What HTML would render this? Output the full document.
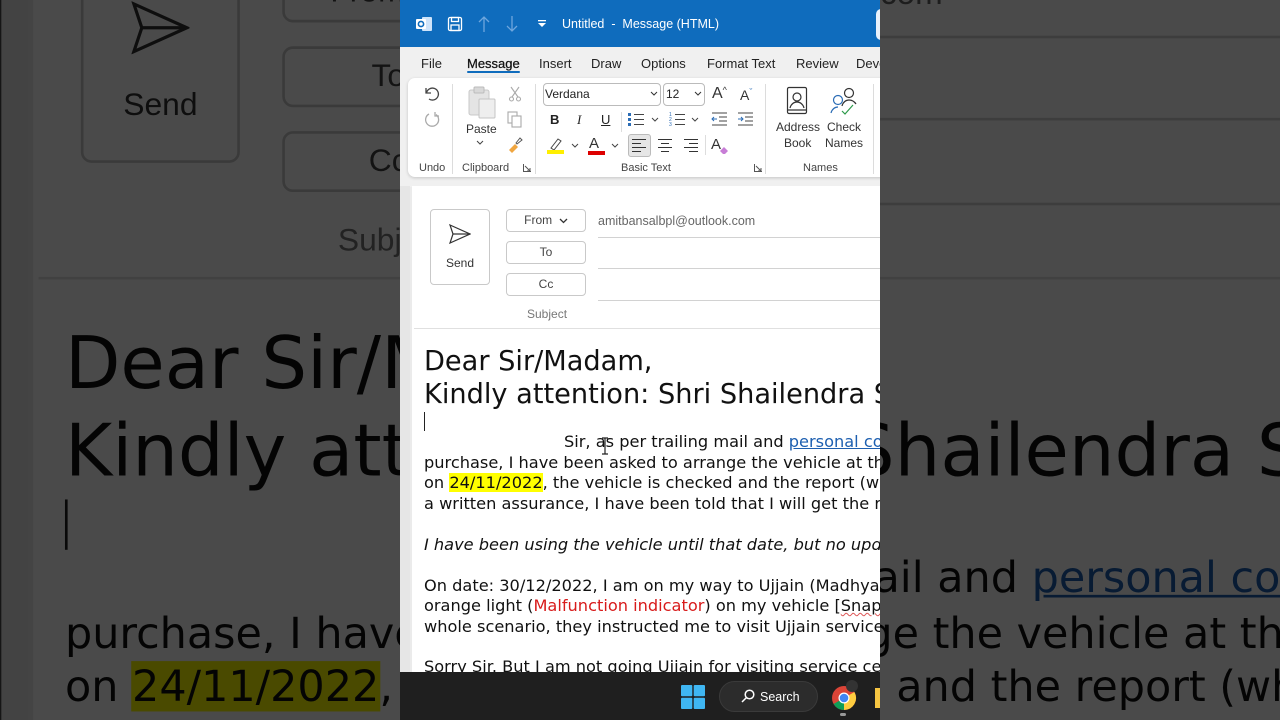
<!DOCTYPE html>
<html><head><meta charset="utf-8">
<style>
*{box-sizing:border-box;margin:0;padding:0}
body{width:1280px;height:720px;overflow:hidden;background:#4b4b4b;position:relative;font-family:"Liberation Sans",sans-serif}
.abs{position:absolute}
#clonewrap{position:absolute;left:0;top:0;width:1280px;height:720px;overflow:hidden}
#shade{position:absolute;left:0;top:0;width:1280px;height:720px;background:rgba(0,0,0,0.71)}
.app{position:absolute;left:400px;top:0;width:480px;height:720px;overflow:hidden;background:#ebebeb}
.t{position:absolute;white-space:nowrap;font-size:12px;color:#333;line-height:1}
.tab{position:absolute;top:56px;font-size:13px;color:#222;white-space:nowrap}
.lbl{position:absolute;top:162px;font-size:11px;color:#444;white-space:nowrap}
.sep{position:absolute;top:84px;width:1px;height:90px;background:#dcdcdc}
.fbtn{position:absolute;left:106px;width:80px;height:23px;border:1px solid #c9c9c9;border-radius:4px;background:#fff;font-size:12px;color:#444;text-align:center;line-height:21px}
.hl{position:absolute;left:198px;width:900px;height:1px;background:#d2d2d2}
.body{position:absolute;left:24px;font-family:"DejaVu Sans",Verdana,sans-serif;font-size:16.2px;color:#111;white-space:nowrap;line-height:20.4px}
.h{font-size:27.2px;line-height:33px;font-family:"DejaVu Sans",Verdana,sans-serif;color:#111;position:absolute;left:24px;white-space:nowrap}
a{color:#1d5fb0;text-decoration:underline}
.sp{text-decoration:underline wavy #d55;text-decoration-thickness:1px}
</style></head><body>
<div id="clonewrap"></div>
<div id="shade"></div>

<div class="app" id="app">
  <div class="abs" style="left:0;top:0;width:480px;height:47px;background:#0f6cbd"></div>
  <svg class="abs" style="left:15px;top:15px" width="18" height="18" viewBox="0 0 18 18"><rect x="7" y="2" width="10" height="14" rx="1" fill="#cfe4fa"/><rect x="1" y="4" width="10" height="10" rx="1" fill="#fff"/><circle cx="6" cy="9" r="2.6" fill="none" stroke="#0f6cbd" stroke-width="1.6"/></svg>
  <svg class="abs" style="left:47px;top:16px" width="16" height="16" viewBox="0 0 16 16" fill="none" stroke="#fff" stroke-width="1.3"><rect x="1.5" y="1.5" width="13" height="13" rx="1.5"/><rect x="4.5" y="1.5" width="7" height="4"/><rect x="4" y="9" width="8" height="5.5"/></svg>
  <svg class="abs" style="left:77px;top:15px" width="14" height="18" viewBox="0 0 14 18" fill="none" stroke="#6fa6dd" stroke-width="1.3"><path d="M7 17V2M2 7l5-5 5 5"/></svg>
  <svg class="abs" style="left:105px;top:15px" width="14" height="18" viewBox="0 0 14 18" fill="none" stroke="#6fa6dd" stroke-width="1.3"><path d="M7 1v15M2 11l5 5 5-5"/></svg>
  <svg class="abs" style="left:137px;top:19px" width="10" height="10" viewBox="0 0 10 10" fill="#fff"><rect x="1" y="1" width="8" height="1.3"/><path d="M1 4h8l-4 4z"/></svg>
  <div class="t" style="left:162px;top:18px;color:#fff;font-size:12.5px">Untitled&nbsp; - &nbsp;Message (HTML)</div>
  <div class="abs" style="left:476px;top:9px;width:20px;height:31px;background:#e9f1fb;border-radius:5px"></div>

  <div class="abs" style="left:0;top:47px;width:900px;height:140px;background:#f0f0f0"></div>
  <div class="tab" style="left:21px">File</div>
  <div class="tab" style="left:67px;color:#111;-webkit-text-stroke:0.25px #111">Message</div>
  <div class="abs" style="left:67px;top:71px;width:53px;height:2px;background:#0f6cbd;border-radius:1px"></div>
  <div class="tab" style="left:139px">Insert</div>
  <div class="tab" style="left:191px">Draw</div>
  <div class="tab" style="left:241px">Options</div>
  <div class="tab" style="left:307px">Format Text</div>
  <div class="tab" style="left:396px">Review</div>
  <div class="tab" style="left:456px">Deve</div>

  <div class="abs" style="left:8px;top:78px;width:490px;height:99px;background:#fff;border-radius:7px;box-shadow:0 1px 3px rgba(0,0,0,.18)"></div>
  <svg class="abs" style="left:23px;top:85px" width="18" height="18" viewBox="0 0 18 18" fill="none" stroke="#444" stroke-width="1.3"><path d="M3 3v5h5"/><path d="M3.5 8A6 6 0 1 1 6 14"/></svg>
  <svg class="abs" style="left:23px;top:111px" width="18" height="18" viewBox="0 0 18 18" fill="none" stroke="#aaa" stroke-width="1.3"><path d="M13 3.5A6.5 6.5 0 1 1 6 3"/><path d="M12 1v4h4"/></svg>
  <div class="lbl" style="left:19px">Undo</div>
  <div class="sep" style="left:52px"></div>
  <svg class="abs" style="left:67px;top:86px" width="30" height="34" viewBox="0 0 30 34"><rect x="2" y="4" width="20" height="25" rx="2" fill="#e4e4e4" stroke="#c8c8c8"/><rect x="7" y="1" width="10" height="6" rx="1" fill="#d8d8d8" stroke="#bbb"/><rect x="12" y="13" width="16" height="19" rx="1" fill="#eee" stroke="#c4c4c4"/></svg>
  <div class="t" style="left:66px;top:123px;font-size:12px">Paste</div>
  <svg class="abs" style="left:76px;top:140px" width="8" height="6" viewBox="0 0 8 6" fill="none" stroke="#444"><path d="M1 1l3 3 3-3"/></svg>
  <svg class="abs" style="left:108px;top:86px" width="14" height="16" viewBox="0 0 14 16" fill="none" stroke="#aaa" stroke-width="1.1"><path d="M3 1l7 10M11 1L4 11"/><circle cx="3.5" cy="13" r="2"/><circle cx="10.5" cy="13" r="2"/></svg>
  <svg class="abs" style="left:107px;top:111px" width="16" height="17" viewBox="0 0 16 17" fill="none" stroke="#aaa" stroke-width="1.1"><rect x="1" y="1" width="9" height="11"/><rect x="5" y="5" width="9" height="11" fill="#fff"/></svg>
  <svg class="abs" style="left:107px;top:136px" width="17" height="17" viewBox="0 0 17 17"><path d="M2 14l6-6 3 3-6 6z" fill="#f0a640"/><path d="M9 7l4-5 2 2-5 4z" fill="none" stroke="#555"/></svg>
  <div class="lbl" style="left:62px">Clipboard</div>
  <svg class="abs" style="left:123px;top:164px" width="8" height="8" viewBox="0 0 8 8" fill="none" stroke="#555"><path d="M1 .5h-.5v7h7v-.5M2 2l5 5M4 7h3V4"/></svg>
  <div class="sep" style="left:135px"></div>
  <div class="abs" style="left:143px;top:83px;width:118px;height:23px;border:1px solid #bbb;border-radius:4px"></div>
  <div class="t" style="left:145px;top:88px;font-size:12px;color:#222">Verdana</div>
  <svg class="abs" style="left:250px;top:91px" width="8" height="6" viewBox="0 0 8 6" fill="none" stroke="#333"><path d="M1 1l3 3 3-3"/></svg>
  <div class="abs" style="left:263px;top:83px;width:42px;height:23px;border:1px solid #bbb;border-radius:4px"></div>
  <div class="t" style="left:266px;top:88px;font-size:12px;color:#222">12</div>
  <svg class="abs" style="left:294px;top:91px" width="8" height="6" viewBox="0 0 8 6" fill="none" stroke="#333"><path d="M1 1l3 3 3-3"/></svg>
  <div class="t" style="left:312px;top:86px;font-size:16px;color:#333">A<span style="font-size:9px;vertical-align:top">^</span></div>
  <div class="t" style="left:340px;top:88px;font-size:14px;color:#333">A<span style="font-size:9px;vertical-align:top;color:#2b6cb5">ˇ</span></div>
  <div class="t" style="left:150px;top:113px;font-size:13px;font-weight:bold;color:#222">B</div>
  <div class="t" style="left:177px;top:113px;font-size:13px;font-style:italic;font-family:'Liberation Serif',serif;color:#222">I</div>
  <div class="t" style="left:201px;top:113px;font-size:13px;text-decoration:underline;color:#222">U</div>
  <div class="abs" style="left:221px;top:112px;width:1px;height:20px;background:#ddd"></div>
  <svg class="abs" style="left:227px;top:111px" width="18" height="17" viewBox="0 0 18 17"><g fill="#2b6cb5"><rect x="1" y="2" width="3" height="3"/><rect x="1" y="7" width="3" height="3"/><rect x="1" y="12" width="3" height="3"/></g><g stroke="#444"><path d="M7 3.5h10M7 8.5h10M7 13.5h10"/></g></svg>
  <svg class="abs" style="left:251px;top:117px" width="8" height="6" viewBox="0 0 8 6" fill="none" stroke="#444"><path d="M1 1l3 3 3-3"/></svg>
  <svg class="abs" style="left:268px;top:111px" width="18" height="17" viewBox="0 0 18 17"><g fill="#2b6cb5" font-size="5" font-family="Liberation Sans"><text x="1" y="5">1</text><text x="1" y="10">2</text><text x="1" y="15">3</text></g><g stroke="#444"><path d="M7 3.5h10M7 8.5h10M7 13.5h10"/></g></svg>
  <svg class="abs" style="left:291px;top:117px" width="8" height="6" viewBox="0 0 8 6" fill="none" stroke="#444"><path d="M1 1l3 3 3-3"/></svg>
  <svg class="abs" style="left:311px;top:111px" width="17" height="16" viewBox="0 0 17 16" stroke="#444" fill="none"><path d="M1 2h15M8 6h8M8 10h8M1 14h15"/><path d="M6 8H1M3 6L1 8l2 2" stroke="#2b6cb5"/></svg>
  <svg class="abs" style="left:337px;top:111px" width="17" height="16" viewBox="0 0 17 16" stroke="#444" fill="none"><path d="M1 2h15M8 6h8M8 10h8M1 14h15"/><path d="M1 8h5M4 6l2 2-2 2" stroke="#2b6cb5"/></svg>
  <svg class="abs" style="left:147px;top:136px" width="18" height="18" viewBox="0 0 18 18"><path d="M4 12l7-9 3 2-7 9z" fill="none" stroke="#444"/><rect x="0" y="14" width="17" height="4" fill="#ffef00"/></svg>
  <svg class="abs" style="left:171px;top:143px" width="8" height="6" viewBox="0 0 8 6" fill="none" stroke="#444"><path d="M1 1l3 3 3-3"/></svg>
  <div class="t" style="left:189px;top:136px;font-size:15px;color:#333">A</div>
  <div class="abs" style="left:188px;top:151px;width:17px;height:4px;background:#d00"></div>
  <svg class="abs" style="left:211px;top:143px" width="8" height="6" viewBox="0 0 8 6" fill="none" stroke="#444"><path d="M1 1l3 3 3-3"/></svg>
  <div class="abs" style="left:228px;top:134px;width:23px;height:23px;background:#e6e6e6;border:1px solid #bbb;border-radius:3px"></div>
  <svg class="abs" style="left:231px;top:138px" width="16" height="15" viewBox="0 0 16 15" stroke="#333"><path d="M1 1.5h14M1 5.5h9M1 9.5h14M1 13.5h9"/></svg>
  <svg class="abs" style="left:257px;top:138px" width="16" height="15" viewBox="0 0 16 15" stroke="#333"><path d="M1 1.5h14M4 5.5h8M1 9.5h14M4 13.5h8"/></svg>
  <svg class="abs" style="left:283px;top:138px" width="16" height="15" viewBox="0 0 16 15" stroke="#333"><path d="M1 1.5h14M6 5.5h9M1 9.5h14M6 13.5h9"/></svg>
  <div class="abs" style="left:305px;top:135px;width:1px;height:20px;background:#ddd"></div>
  <div class="t" style="left:311px;top:137px;font-size:15px;color:#333">A</div>
  <svg class="abs" style="left:319px;top:145px" width="10" height="10" viewBox="0 0 10 10"><path d="M1 6l4-4 4 4-3 3H4z" fill="#c77dd6"/></svg>
  <div class="lbl" style="left:221px">Basic Text</div>
  <svg class="abs" style="left:354px;top:164px" width="8" height="8" viewBox="0 0 8 8" fill="none" stroke="#555"><path d="M1 .5h-.5v7h7v-.5M2 2l5 5M4 7h3V4"/></svg>
  <div class="sep" style="left:365px"></div>
  <svg class="abs" style="left:386px;top:86px" width="22" height="30" viewBox="0 0 22 30" fill="none" stroke="#333" stroke-width="1.2"><rect x="1.5" y="1.5" width="19" height="26" rx="1.5"/><circle cx="11" cy="11" r="4"/><path d="M4 22c1-4 4-6 7-6s6 2 7 6"/><path d="M1.5 24h19"/></svg>
  <div class="t" style="left:376px;top:121px;font-size:12px;color:#333">Address</div>
  <div class="t" style="left:384px;top:137px;font-size:12px;color:#333">Book</div>
  <svg class="abs" style="left:429px;top:86px" width="30" height="30" viewBox="0 0 30 30" fill="none" stroke-width="1.2"><circle cx="20" cy="7" r="4.5" stroke="#333"/><path d="M13 20c1-4 4-6 7-6s5 1 7 4" stroke="#333"/><circle cx="9" cy="14" r="4.5" stroke="#2b6cb5"/><path d="M2 27c1-4 4-6 7-6" stroke="#2b6cb5"/><path d="M13 25l3 3 8-9" stroke="#2c9a4a"/></svg>
  <div class="t" style="left:427px;top:121px;font-size:12px;color:#333">Check</div>
  <div class="t" style="left:425px;top:137px;font-size:12px;color:#333">Names</div>
  <div class="lbl" style="left:403px">Names</div>
  <div class="sep" style="left:473px"></div>

  <div class="abs" style="left:12px;top:186px;width:1000px;height:600px;background:#fff"></div>
  <div class="abs" style="left:30px;top:209px;width:60px;height:76px;border:1px solid #c9c9c9;border-radius:4px;background:#fff"></div>
  <svg class="abs" style="left:49px;top:224px" width="22" height="20" viewBox="0 0 22 20" fill="none" stroke="#333" stroke-width="1.2"><path d="M1 1l20 9-20 9 3-9z"/><path d="M4 10h17"/></svg>
  <div class="t" style="left:46px;top:257px;font-size:12px;color:#333">Send</div>
  <div class="fbtn" style="top:209px">From&nbsp; <svg width="9" height="6" viewBox="0 0 9 6" fill="none" stroke="#333" stroke-width="1.3"><path d="M1 1l3.5 3.5L8 1"/></svg></div>
  <div class="fbtn" style="top:241px">To</div>
  <div class="fbtn" style="top:273px">Cc</div>
  <div class="t" style="left:127px;top:308px;font-size:12px;color:#777">Subject</div>
  <div class="t" style="left:198px;top:215px;font-size:12.5px;color:#666">amitbansalbpl@outlook.com</div>
  <div class="hl" style="top:237px"></div>
  <div class="hl" style="top:268px"></div>
  <div class="hl" style="top:300px"></div>
  <div class="abs" style="left:14px;top:328px;width:1000px;height:1px;background:#e0e0e0"></div>

  <div class="h" style="top:345px">Dear Sir/Madam,</div>
  <div class="h" style="top:378px">Kindly attention: Shri Shailendra Singh</div>
  <div class="abs" style="left:24px;top:412px;width:1px;height:19px;background:#222"></div>
  <div class="body" style="top:432px"><span style="display:inline-block;width:140px"></span>Sir, as per trailing mail and <a>personal conversation</a></div>
  <div class="body" style="top:452.5px">purchase, I have been asked to arrange the vehicle at the service</div>
  <div class="body" style="top:473px">on <span style="background:#ffff00">24/11/2022</span>, the vehicle is checked and the report (which</div>
  <div class="body" style="top:493.5px">a written assurance, I have been told that I will get the report</div>
  <div class="body" style="top:534.5px;font-style:italic">I have been using the vehicle until that date, but no update</div>
  <div class="body" style="top:575.5px">On date: 30/12/2022, I am on my way to Ujjain (Madhya Pradesh)</div>
  <div class="body" style="top:596px">orange light (<span style="color:#d81b1b">Malfunction indicator</span>) on my vehicle [<span class="sp">Snapshot</span>]</div>
  <div class="body" style="top:616.5px">whole scenario, they instructed me to visit Ujjain service center</div>
  <div class="body" style="top:657px">Sorry Sir. But I am not going <span class="sp">Ujjain</span> for visiting <span class="sp">service</span> center</div>
  <svg class="abs" style="left:200px;top:437px" width="10" height="18" viewBox="0 0 10 18" fill="none" stroke="#222" stroke-width="1.2"><path d="M2 1h6M5 1v16M2 17h6"/></svg>
  <div class="abs" style="left:0;top:186px;width:10px;height:600px;background:#e6e6e6"></div>

  <div class="abs" style="left:0;top:672px;width:480px;height:48px;background:#1f1f1f"></div>
  <svg class="abs" style="left:281px;top:685px" width="24" height="24" viewBox="0 0 24 24"><g fill="#3fb6f2"><rect x="0" y="0" width="11.3" height="11.3" rx="1"/><rect x="12.7" y="0" width="11.3" height="11.3" rx="1"/><rect x="0" y="12.7" width="11.3" height="11.3" rx="1"/><rect x="12.7" y="12.7" width="11.3" height="11.3" rx="1"/></g></svg>
  <div class="abs" style="left:319px;top:681px;width:99px;height:31px;background:#2c2c2c;border-radius:16px;border:1px solid #3a3a3a"></div>
  <svg class="abs" style="left:341px;top:689px" width="14" height="14" viewBox="0 0 14 14" fill="none" stroke="#fff" stroke-width="1.5"><circle cx="8.5" cy="5.5" r="4.3"/><path d="M5.5 8.5L1 13"/></svg>
  <div class="t" style="left:360px;top:691px;color:#fff;font-size:12.5px">Search</div>
  <svg class="abs" style="left:431px;top:685px" width="26" height="26" viewBox="0 0 26 26"><circle cx="13" cy="13" r="12" fill="#db4437"/><path d="M13 13L2.6 19A12 12 0 0 0 13 25z" fill="#0f9d58"/><path d="M13 13L13 25A12 12 0 0 0 23.4 7z" fill="#ffcd40"/><circle cx="13" cy="13" r="5.5" fill="#fff"/><circle cx="13" cy="13" r="4.3" fill="#4285f4"/></svg>
  <div class="abs" style="left:446px;top:680px;width:12px;height:12px;border-radius:6px;background:#333"></div>
  <div class="abs" style="left:440px;top:713px;width:6px;height:3px;border-radius:2px;background:#999"></div>
  <div class="abs" style="left:475px;top:688px;width:8px;height:20px;background:#f6c542"></div>
</div>

<script>
(function(){
  var app=document.getElementById('app');
  var c=app.cloneNode(true);
  c.removeAttribute('id');
  c.style.width='1000px';
  c.style.transformOrigin='241.6px 359px';
  c.style.transform='scale(2.65)';
  document.getElementById('clonewrap').appendChild(c);
})();
</script>
</body></html>
